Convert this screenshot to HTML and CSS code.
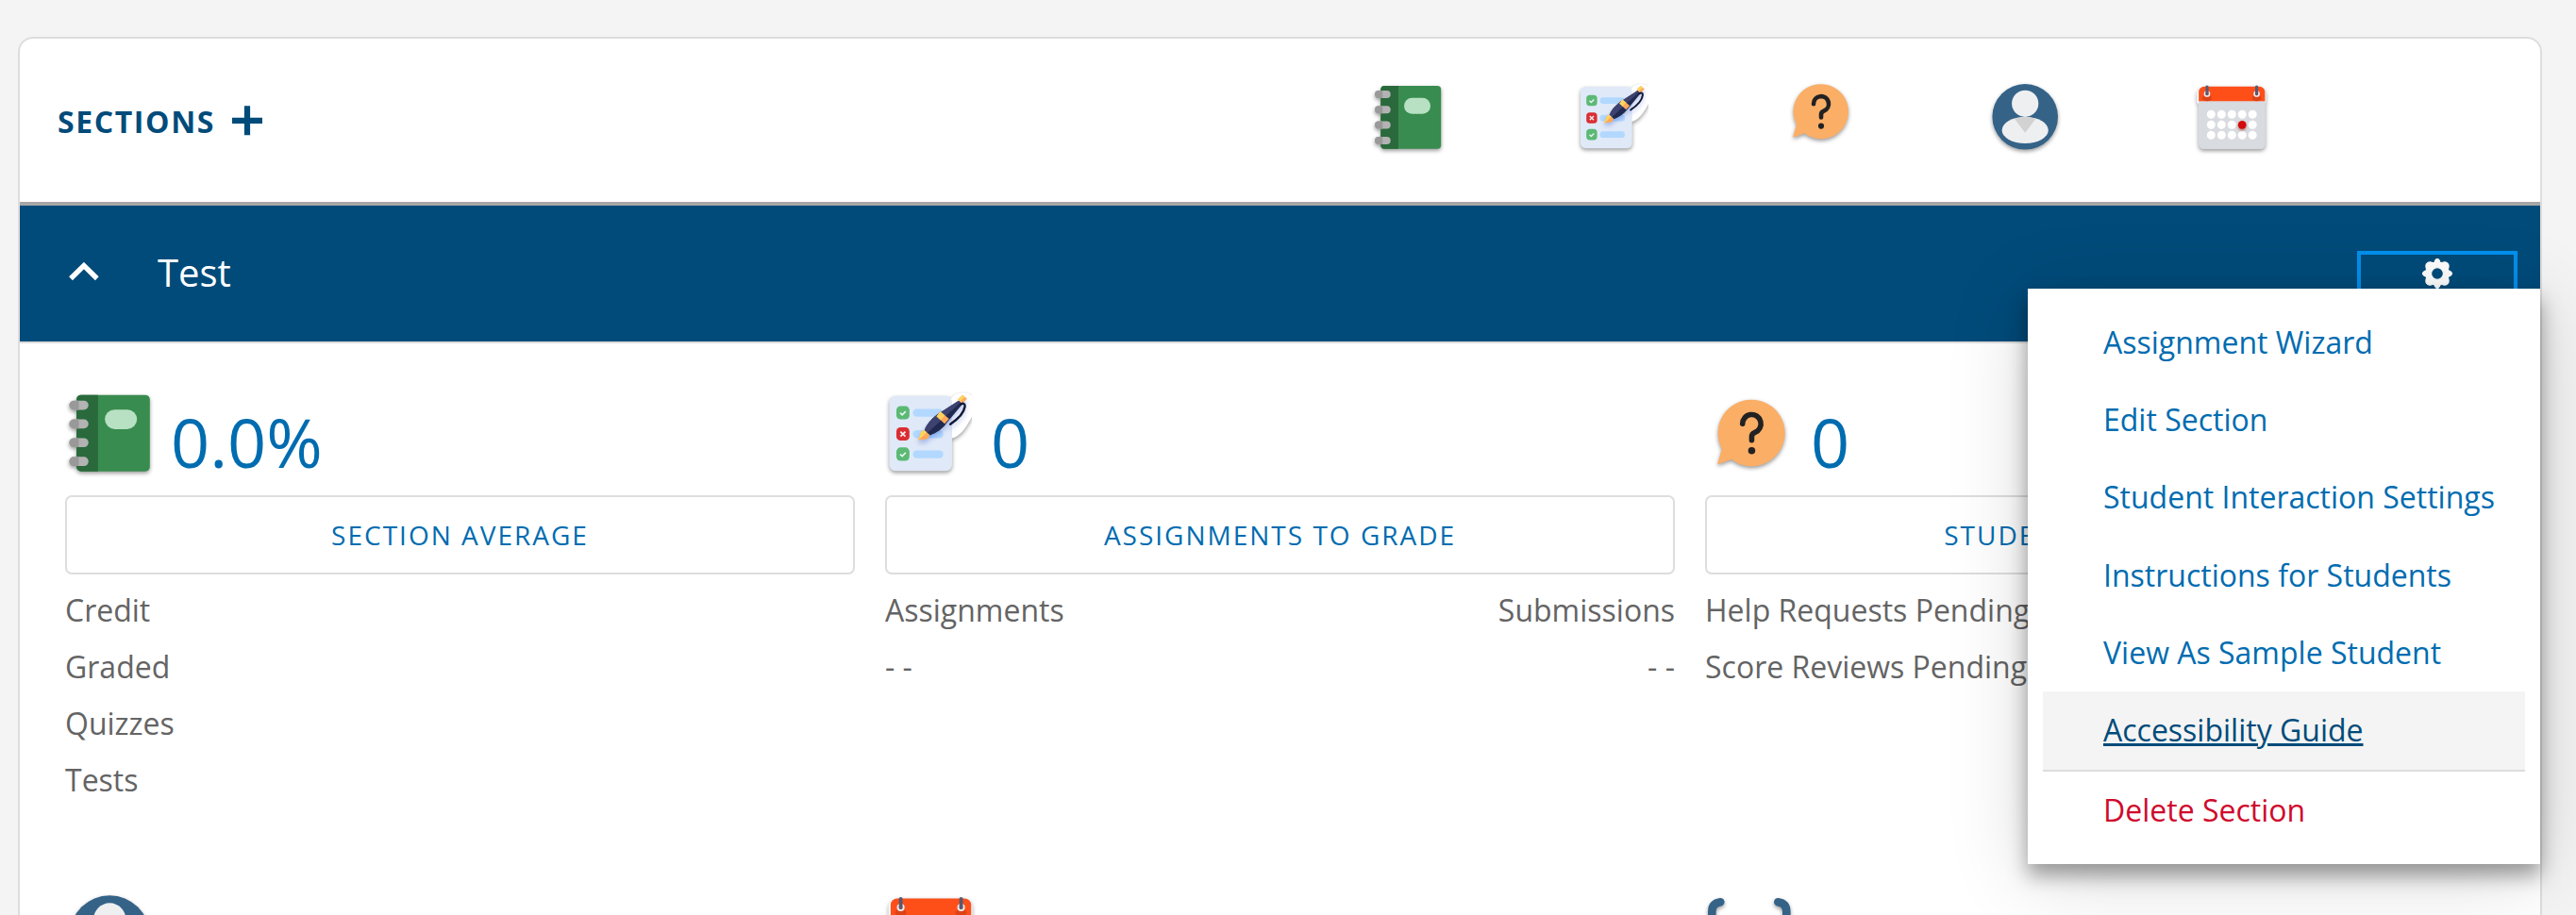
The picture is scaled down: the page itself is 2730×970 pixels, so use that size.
FILE: index.html
```html
<!DOCTYPE html>
<html lang="en">
<head>
<meta charset="utf-8">
<title>Sections</title>
<link rel="stylesheet" href="styles.css">
</head>
<body>
<svg class="sprite" aria-hidden="true">
  <symbol id="book" viewBox="0 0 74 74" overflow="visible">
    <rect x="8.3" y="3" width="63.9" height="66.7" rx="4" fill="#388c4f"/>
    <path d="M27 3H12.3a4 4 0 0 0-4 4v58.7a4 4 0 0 0 4 4H27z" fill="#2a693b"/>
    <rect x="33" y="15.8" width="28" height="17" rx="8.5" fill="#b7e1c2"/>
    <g fill="#b3b3b3">
      <rect x="2" y="8" width="16.7" height="8" rx="4"/><rect x="2" y="24.3" width="16.7" height="8" rx="4"/>
      <rect x="2" y="40.6" width="16.7" height="8" rx="4"/><rect x="2" y="57" width="16.7" height="8" rx="4"/>
    </g>
    <path d="M10.3 8H6a4 4 0 0 0 0 8h4.3zM10.3 24.3H6a4 4 0 0 0 0 8h4.3zM10.3 40.6H6a4 4 0 0 0 0 8h4.3zM10.3 57H6a4 4 0 0 0 0 8h4.3z" fill="#999"/>
  </symbol>
  <symbol id="tasks" viewBox="0 0 74 74" overflow="visible">
    <path d="M54 8C57 4 61 1 66 1c3 0 6 1 8 3v18c-2 4-4 7-6 10-3 4-7 8-12 9z" fill="#fff"/>
    <rect x="2" y="4" width="54.7" height="65.2" rx="5.5" fill="#dfe9f8"/>
    <g fill="#b2d8ff"><rect x="22.6" y="15.2" width="26.4" height="6.8" rx="3.4"/><rect x="22.6" y="33.8" width="26.4" height="6.8" rx="3.4"/><rect x="22.6" y="51.3" width="26.4" height="6.8" rx="3.4"/></g>
    <g fill="#5bb974"><rect x="8.2" y="12.7" width="11.4" height="11.6" rx="3.6"/><rect x="8.2" y="48.8" width="11.4" height="11.6" rx="3.6"/></g>
    <rect x="8.2" y="31.2" width="11.4" height="11.6" rx="3.6" fill="#dc2d32"/>
    <path d="M11.5 18.7l1.8 1.7 3-3M11.5 54.7l1.8 1.7 3-3M11.8 35l4.2 4.2M16 35l-4.2 4.2" stroke="#e8f3ef" stroke-width="1.4" fill="none"/>
    <g class="pen">
      <path d="M62.5 8L44 20C38 24.5 34.5 29 32.600 34l5 4.300c6-2.500 10.500-5.300 14-10.300L65.800 10.800z" fill="#202a50"/>
      <path d="M62.5 8L44 20C38 24.5 34.5 29 32.600 34l2.600 2.200L64.200 9.500z" fill="#3d4270"/>
      <path d="M43.2 21.7l3.3-4.3 7.6 6.5-3.8 4.3z" fill="#ffa959"/><path d="M43.2 21.7l3.3-4.3 3.9 3.4-3.7 4z" fill="#ffd45e"/>
      <path d="M61.8 6.8l4.1-3.8 3.9 3.4-4.3 4.2z" fill="#ffa959"/><path d="M61.8 6.8l4.1-3.8 2 1.8-4.2 3.9z" fill="#ffd45e"/>
      <path d="M32.5 33.7l4.5 4.2-1.6 3.4-8.2 1.2 2.5-7.3z" fill="#ffa959"/><path d="M32.5 33.7l2.2 2-7.5 6.8 2.5-7.3z" fill="#ffd45e"/>
      <path d="M64.3 11.2c2-1.5 4-.5 3.6 2C67 19 62 24 55.2 28.500" fill="none" stroke="#111a36" stroke-width="2" stroke-linecap="round"/>
    </g>
  </symbol>
  <symbol id="help" viewBox="0 0 74 74" overflow="visible">
    <path d="M39 7.2a29 29 0 1 1-17.6 52.1L10 63.4q-1 .2-.7-.8L13 50A29 29 0 0 1 39 7.2z" fill="#fbae66"/>
    <path d="M31 28.2a8 8 0 1 1 10.9 7.4q-2.9 1.1-2.9 3.9v3" fill="none" stroke="#222" stroke-width="4.6" stroke-linecap="round" stroke-linejoin="round"/>
    <circle cx="39" cy="51.6" r="3.1" fill="#222"/>
  </symbol>
  <symbol id="user" viewBox="0 0 74 74" overflow="visible">
    <circle cx="37.2" cy="35.8" r="34.8" fill="#356388"/>
    <circle cx="37.2" cy="21.8" r="14.1" fill="#eeeff1"/>
    <ellipse cx="37.2" cy="50" rx="24.6" ry="14" fill="#eeeff1"/>
    <path d="M25.8 37.7Q37.2 34.2 48.6 37.7L37.2 52.7z" fill="#d2d2d2"/>
  </symbol>
  <symbol id="calendar" viewBox="0 0 74 74" overflow="visible">
    <rect x="1.4" y="6" width="73" height="18" rx="5" fill="#fff"/>
    <rect x="3" y="4" width="70.8" height="66" rx="5.5" fill="#d8dbe0"/>
    <path d="M3.2 19.3V9.5a5.8 5.8 0 0 1 5.8-5.8h58.5a5.8 5.8 0 0 1 5.8 5.8v9.8z" fill="#ff4f19"/>
    <ellipse cx="12" cy="16" rx="5" ry="3.2" fill="#dc4317"/><ellipse cx="64.6" cy="16" rx="5" ry="3.2" fill="#dc4317"/>
    <g fill="#ff4f19" stroke="#eceaf0" stroke-width="1.7"><circle cx="12" cy="11.5" r="2.5"/><circle cx="64.6" cy="11.5" r="2.5"/></g>
    <path d="M12 4v7.6M64.6 4v7.6" stroke="#5b5870" stroke-width="3.2" stroke-linecap="round"/>
    <path d="M16.3 33.3h.01M27.3 33.3h.01M38.3 33.3h.01M49.2 33.3h.01M60.2 33.3h.01M16.3 44.3h.01M27.3 44.3h.01M38.3 44.3h.01M60.2 44.3h.01M16.3 55.2h.01M27.3 55.2h.01M38.3 55.2h.01M49.2 55.2h.01M60.2 55.2h.01" stroke="#fff" stroke-width="9" stroke-linecap="round"/>
    <circle class="today" cx="49.2" cy="44.3" r="4.4" fill="#d40b0b"/>
  </symbol>
</svg>

<main class="card">
  <header class="card-head">
    <h1 class="title">SECTIONS</h1>
    <svg class="plus" viewBox="0 0 32 32"><path d="M16 .3v31M0 15.8h32" stroke="#004b7a" stroke-width="6.2"/></svg>
    <div class="legend">
      <svg class="icon"><use href="#book"/></svg>
      <svg class="icon clipped"><use href="#tasks"/></svg>
      <svg class="icon raised"><use href="#help"/></svg>
      <svg class="icon"><use href="#user"/></svg>
      <svg class="icon"><use href="#calendar"/></svg>
    </div>
  </header>

  <section class="bar">
    <svg class="chevron" viewBox="0 0 34 20"><path d="M3 17.2L16.9 3.6 30.8 17.2" fill="none" stroke="#fff" stroke-width="5.4" stroke-linejoin="miter"/></svg>
    <h2 class="name">Test</h2>
    <button class="gear" aria-label="Section settings">
      <svg viewBox="-16.6 -16.6 33.2 33.2"><path fill="#fff" stroke="#fff" stroke-width="1.3" fill-rule="evenodd" d="M0-16C2.2-16 2.3-14.2 3.2-12.4Q3.8-11.5 4.9-11.9C7-12.6 8.8-13 10.4-12L12-10.4C13-8.8 12.6-7 11.9-4.9Q11.5-3.8 12.4-3.2C14.2-2.3 16-2.2 16 0S14.2 2.3 12.4 3.2Q11.5 3.8 11.9 4.9C12.6 7 13 8.8 12 10.4L10.4 12C8.8 13 7 12.6 4.9 11.9Q3.8 11.5 3.2 12.4C2.3 14.2 2.2 16 0 16S-2.3 14.2-3.2 12.4Q-3.8 11.5-4.9 11.9C-7 12.6-8.8 13-10.4 12L-12 10.4C-13 8.8-12.6 7-11.9 4.9Q-11.5 3.8-12.4 3.2C-14.2 2.3-16 2.2-16 0S-14.2-2.3-12.4-3.2Q-11.5-3.8-11.9-4.9C-12.6-7-13-8.8-12-10.4L-10.4-12C-8.8-13-7-12.6-4.9-11.9Q-3.8-11.5-3.2-12.4C-2.3-14.2-2.2-16 0-16zM0-6.7A6.7 6.7 0 1 0 0 6.7 6.7 6.7 0 0 0 0-6.7z"/></svg>
    </button>
    <nav class="menu">
      <a class="item">Assignment Wizard</a>
      <a class="item">Edit Section</a>
      <a class="item">Student Interaction Settings</a>
      <a class="item">Instructions for Students</a>
      <a class="item">View As Sample Student</a>
      <a class="item active">Accessibility Guide</a>
      <a class="item danger">Delete Section</a>
    </nav>
  </section>

  <section class="grid">
    <article class="cell">
      <div class="metric"><svg class="icon big"><use href="#book"/></svg><span class="value">0.0%</span></div>
      <button class="btn">SECTION AVERAGE</button>
      <ul class="rows"><li>Credit</li><li>Graded</li><li>Quizzes</li><li>Tests</li></ul>
    </article>
    <article class="cell">
      <div class="metric"><svg class="icon big clipped"><use href="#tasks"/></svg><span class="value">0</span></div>
      <button class="btn">ASSIGNMENTS TO GRADE</button>
      <ul class="rows"><li><span>Assignments</span><span>Submissions</span></li><li><span>- -</span><span>- -</span></li></ul>
    </article>
    <article class="cell">
      <div class="metric"><svg class="icon big"><use href="#help"/></svg><span class="value">0</span></div>
      <button class="btn requests">STUDENT REQUESTS</button>
      <ul class="rows"><li>Help Requests Pending</li><li>Score Reviews Pending</li></ul>
    </article>
    <article class="cell"><svg class="icon big"><use href="#user"/></svg></article>
    <article class="cell"><svg class="icon big"><use href="#calendar"/></svg></article>
    <article class="cell">
      <svg class="icon big" viewBox="0 0 90 90"><path d="M14.3 8.3Q5.300 9.600 5.300 18.500V28M75.300 8.300Q84.300 9.600 84.300 18.500V28M14.300 82Q5.300 81 5.300 72V62M75.300 82Q84.300 81 84.300 72V62" fill="none" stroke="#356388" stroke-width="8.600" stroke-linecap="round"/></svg>
    </article>
  </section>
</main>
</body>
</html>
```
FILE: styles.css
```css
* { box-sizing: border-box; }
html, body { margin: 0; height: 970px; overflow: hidden; }
body {
  background: #f4f4f4;
  padding: 39px 36px 0 19px;
  font-family: "Open Sans", "Noto Sans", sans-serif;
  font-size: 32px;
  color: #646464;
}
h1, h2, ul { margin: 0; padding: 0; font-weight: 400; list-style: none; }
button { font: inherit; background: none; padding: 0; }
.sprite { position: absolute; width: 0; height: 0; }

.card {
  height: 1200px;
  background: #fff;
  border: 2px solid #ddd;
  border-radius: 16px;
}
.card-head {
  display: flex;
  align-items: flex-start;
  height: 177px;
  padding-left: 40px;
  border-bottom: 4px solid #a6a6a6;
}
.title {
  margin-top: 66px;
  width: 185px;
  line-height: 44px;
  font-size: 32px;
  font-weight: 700;
  letter-spacing: 1.6px;
  color: #004b7a;
}
.plus { width: 32px; height: 32px; margin-top: 71px; }
.legend { display: flex; gap: 143.9px; margin: 47px 0 0 1177px; }
.icon {
  display: block;
  flex: none;
  width: 74px;
  height: 74px;
  overflow: visible;
  filter: drop-shadow(0 2px 2px rgba(0, 0, 0, .4));
}
.icon.big { width: 90px; height: 90px; margin-left: 2px; }
.clipped { clip-path: inset(0 0 -10px -6px); }
.raised { margin-top: -6px; }
.pen { filter: drop-shadow(0 3px 2px rgba(60, 90, 200, .35)); }
.today { filter: drop-shadow(0 2px 1px rgba(160, 60, 40, .5)); }

.bar {
  position: relative;
  display: flex;
  align-items: flex-start;
  height: 146px;
  background: #004b7a;
  border-bottom: 2px solid #ddd;
  padding: 0 24px 0 51px;
}
.chevron { width: 34px; height: 20px; margin-top: 60px; }
.name { margin: 43px 0 0 61px; line-height: 56px; font-size: 40px; color: #fff; }
.gear {
  width: 170px;
  height: 50px;
  margin: 48px 0 0 auto;
  border: 4px solid #0090ed;
}
.gear svg { display: block; width: 32px; height: 32px; margin: -2px auto 0; }

.menu {
  position: absolute;
  top: 88px;
  right: 0;
  z-index: 2;
  width: 543px;
  height: 610px;
  padding: 16px;
  background: #fff;
  box-shadow: 0 12px 20px rgba(0, 0, 0, .36), 0 12px 80px rgba(0, 0, 0, .16);
}
.item {
  display: block;
  height: 82.2px;
  padding-left: 64px;
  line-height: 81.5px;
  white-space: nowrap;
  color: #006cb0;
}
.item.active {
  height: 85px;
  background: #f4f4f4;
  border-bottom: 2px solid #ddd;
  color: #004b7a;
  text-decoration: underline;
}
.item.danger { color: #cf0a2c; }

.grid {
  display: grid;
  grid-template-columns: repeat(3, 1fr);
  gap: 91px 32px;
  padding: 51px 48px 0;
}
.cell { min-width: 0; }
.cell:nth-child(-n + 3) { height: 442px; }
.metric { display: flex; align-items: flex-start; height: 110px; }
.value { margin: 4px 0 0 20px; font-size: 72px; line-height: 98px; color: #006cb0; }
.btn {
  display: block;
  width: 100%;
  height: 84px;
  border: 2px solid #ddd;
  border-radius: 7px;
  font-size: 28px;
  letter-spacing: 2px;
  color: #006cb0;
}
.btn.requests { padding-right: 31px; }
.rows { margin-top: 8px; }
.rows li { display: flex; justify-content: space-between; line-height: 60px; }
```
